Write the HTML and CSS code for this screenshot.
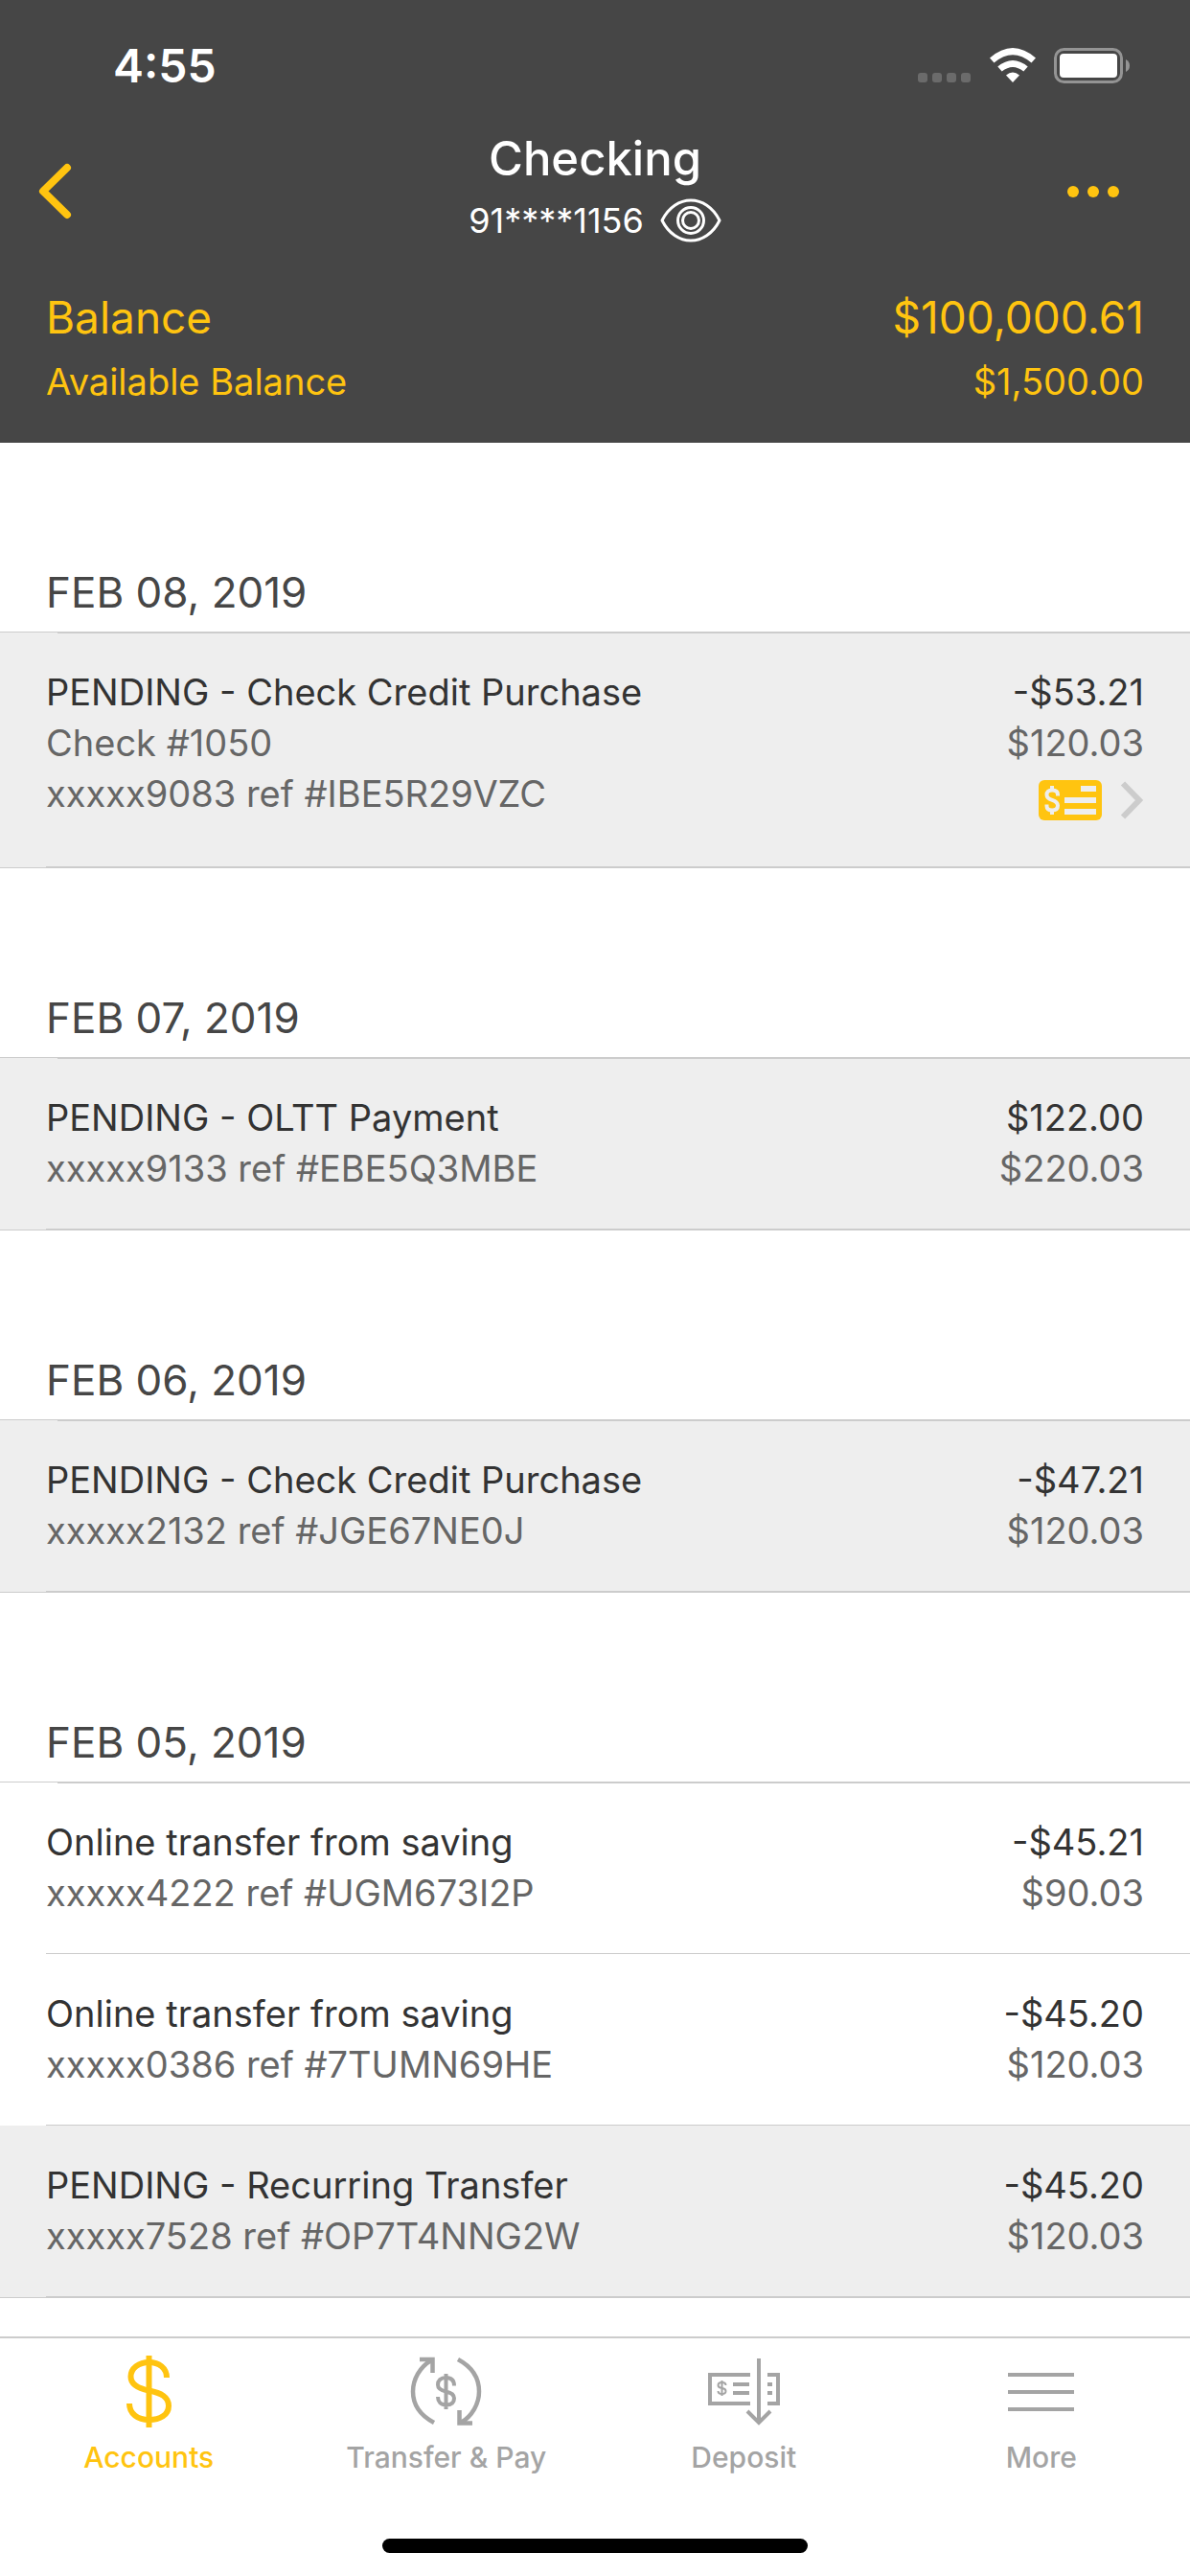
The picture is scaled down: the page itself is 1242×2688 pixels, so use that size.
FILE: index.html
```html
<!DOCTYPE html>
<html lang="en">
<head>
    <meta charset="UTF-8">
    <meta name="viewport" content="width=device-width, initial-scale=1">
    <title>Checking</title>
    <link rel="stylesheet" href="styles.css">
</head>
<body>
    <header class="top">
        <div class="status">
            <span class="time">4:55</span>
            <div class="signals">
                <svg width="56" height="37" viewBox="0 0 56 37" fill="#6b6b6b">
                    <rect x="0" y="26" width="10" height="10" rx="3"/><rect x="15" y="26" width="10" height="10" rx="3"/><rect x="30" y="26" width="10" height="10" rx="3"/><rect x="45" y="26" width="10" height="10" rx="3"/>
                </svg>
                <svg width="48" height="37" viewBox="0 0 48 37" fill="#fff">
                    <path d="M0 10.500Q24 -10.500 48 10.500L43.500 15.500Q24 -1 4.500 15.500Z"/>
                    <path d="M8.300 19.500Q24 6.500 39.700 19.500L35.300 24.500Q24 15.500 12.700 24.500Z"/>
                    <path d="M17 28.500Q24 22.500 31 28.500L24 36Z"/>
                </svg>
                <svg width="80" height="37" viewBox="0 0 80 37">
                    <rect x="1.500" y="1.500" width="69" height="34" rx="9" fill="none" stroke="#949494" stroke-width="3"/>
                    <rect x="6" y="6" width="60" height="25" rx="4" fill="#fff"/>
                    <path d="M75 12Q79 14 79 18.500T75 25Z" fill="#949494"/>
                </svg>
            </div>
        </div>
        <div class="nav">
            <button class="icon-btn" aria-label="Back">
                <svg width="36" height="60" viewBox="0 0 36 60" fill="none" stroke="#ffc410" stroke-width="8" stroke-linecap="round" stroke-linejoin="round"><path d="M30 5L5 29.500L30 54"/></svg>
            </button>
            <div class="account">
                <h1>Checking</h1>
                <div class="number">
                    <span>91****1156</span>
                    <button class="icon-btn" aria-label="Show account number">
                        <svg width="64" height="46" viewBox="0 0 64 46" fill="none" stroke="#fff" stroke-width="3">
                            <path d="M2 23C16 -5 48 -5 62 23C48 51 16 51 2 23Z" stroke-linejoin="round"/>
                            <circle cx="32" cy="23" r="13.500"/><circle cx="32" cy="23" r="8.500"/>
                        </svg>
                    </button>
                </div>
            </div>
            <button class="icon-btn menu" aria-label="Options">
                <svg width="56" height="12" viewBox="0 0 56 12" fill="#ffc410"><circle cx="6" cy="6" r="6"/><circle cx="27" cy="6" r="6"/><circle cx="48" cy="6" r="6"/></svg>
            </button>
        </div>
        <div class="balance">
            <div class="line big"><span>Balance</span><span>$100,000.61</span></div>
            <div class="line"><span>Available Balance</span><span>$1,500.00</span></div>
        </div>
    </header>

    <main>
        <section>
            <h2>FEB 08, 2019</h2>
            <ul>
                <li class="pending">
                    <div class="desc"><p>PENDING - Check Credit Purchase</p><p>Check #1050</p><p>xxxxx9083 ref #IBE5R29VZC</p></div>
                    <div class="amount">
                        <p>-$53.21</p><p>$120.03</p>
                        <button class="icon-btn check" aria-label="View check">
                            <svg width="66" height="42" viewBox="0 0 66 42">
                                <rect width="66" height="42" rx="6" fill="#ffc410"/>
                                <path d="M44 6h16v6H44zM27 18h33v6H27zM27 30h33v6H27z" fill="#eee"/>
                                <path d="M20 16.500V15Q20 10.500 14.200 10.500T8.500 15.500Q8.500 19 14.200 20.800T20 26.500Q20 31.500 14.200 31.500T8.500 27V25.500" fill="none" stroke="#eee" stroke-width="4"/>
                                <path d="M12 6h4v5h-4zM12 31h4v5h-4z" fill="#eee"/>
                            </svg>
                            <svg width="26" height="40" viewBox="0 0 26 40" fill="none" stroke="#ccc" stroke-width="6"><path d="M4 2.500L21 20L4 37.500"/></svg>
                        </button>
                    </div>
                </li>
            </ul>
        </section>
        <section>
            <h2>FEB 07, 2019</h2>
            <ul>
                <li class="pending">
                    <div class="desc"><p>PENDING - OLTT Payment</p><p>xxxxx9133 ref #EBE5Q3MBE</p></div>
                    <div class="amount"><p>$122.00</p><p>$220.03</p></div>
                </li>
            </ul>
        </section>
        <section>
            <h2>FEB 06, 2019</h2>
            <ul>
                <li class="pending">
                    <div class="desc"><p>PENDING - Check Credit Purchase</p><p>xxxxx2132 ref #JGE67NE0J</p></div>
                    <div class="amount"><p>-$47.21</p><p>$120.03</p></div>
                </li>
            </ul>
        </section>
        <section>
            <h2>FEB 05, 2019</h2>
            <ul>
                <li>
                    <div class="desc"><p>Online transfer from saving</p><p>xxxxx4222 ref #UGM673I2P</p></div>
                    <div class="amount"><p>-$45.21</p><p>$90.03</p></div>
                </li>
                <li>
                    <div class="desc"><p>Online transfer from saving</p><p>xxxxx0386 ref #7TUMN69HE</p></div>
                    <div class="amount"><p>-$45.20</p><p>$120.03</p></div>
                </li>
                <li class="pending">
                    <div class="desc"><p>PENDING - Recurring Transfer</p><p>xxxxx7528 ref #OP7T4NNG2W</p></div>
                    <div class="amount"><p>-$45.20</p><p>$120.03</p></div>
                </li>
            </ul>
        </section>
    </main>

    <footer class="bottom">
        <nav class="tabs">
            <a href="#" class="on">
                <svg width="76" height="76" viewBox="0 0 76 76" fill="none" stroke="currentColor" stroke-width="6">
                    <path d="M57 23C57 13 49 7 38.500 7S19.500 13 19.500 22C19.500 30 26 34 38.500 36.500S59 43 59 52.500S50 67 38.500 67S18 61 18 50"/>
                    <path d="M38.500 0V75"/>
                </svg>
                <span>Accounts</span>
            </a>
            <a href="#">
                <svg width="76" height="76" viewBox="0 0 76 76" fill="none" stroke="currentColor" stroke-width="4.500">
                    <path d="M25 70C10 62 3 51 3 37.500C3 25 10 12 22 5M50 4C65 12 72 24 72 37.500C72 50 65 63 53 70"/>
                    <path d="M10 4H23.500V18M65 70.500H51.500V57"/>
                    <path d="M46 31.500C46 26 43 23 37.500 23S29 26 29 30.500C29 35 33 36.500 37.500 37.500S46 40 46 44.500S43 51.500 37.500 51.500S29 48 29 43M37.500 19V56" stroke-width="4"/>
                </svg>
                <span>Transfer &amp; Pay</span>
            </a>
            <a href="#">
                <svg width="76" height="76" viewBox="0 0 76 76" fill="none" stroke="currentColor" stroke-width="4">
                    <path d="M45 20H3V50H45M63 20H74V50H63"/>
                    <path d="M54 3V70M42 58L54 70L66 58"/>
                    <path d="M27 30H44M27 39H44M63 30H68M63 39H68"/>
                    <path d="M19.500 31Q19.500 28 15.500 28T11.500 31Q11.500 33.500 15.500 34T19.500 37Q19.500 40 15.500 40T11.500 37M15.500 26V42" stroke-width="2"/>
                </svg>
                <span>Deposit</span>
            </a>
            <a href="#">
                <svg width="76" height="76" viewBox="0 0 76 76" fill="none" stroke="currentColor" stroke-width="4"><path d="M3 20H72M3 38H72M3 56H72"/></svg>
                <span>More</span>
            </a>
        </nav>
        <div class="home"></div>
    </footer>
</body>
</html>
```

FILE: styles.css
```css
* { margin: 0; padding: 0; box-sizing: border-box; }
body { min-height: 100vh; display: flex; flex-direction: column; background: #fff; color: #333; font-family: Inter, "Liberation Sans", sans-serif; font-size: 38px; line-height: 53px; }
svg { display: block; }
ul { list-style: none; }
a { text-decoration: none; }
.icon-btn { display: flex; align-items: center; border: 0; background: none; cursor: pointer; }

/* header */
.top { padding-bottom: 30px; background: #464646; color: #fff; }
.status { display: flex; justify-content: space-between; align-items: center; height: 136px; padding: 0 62px 0 118px; }
.time { font-size: 48px; font-weight: 600; }
.signals { display: flex; gap: 19px; }
.nav { display: grid; grid-template-columns: 1fr auto 1fr; align-items: center; height: 124px; padding: 0 40px; }
.account { text-align: center; }
.account h1 { font-size: 49px; font-weight: 500; line-height: 60px; }
.number { display: flex; align-items: center; justify-content: center; gap: 17px; font-size: 36px; height: 68px; }
.menu { justify-self: end; margin-right: 32px; }
.balance { padding: 38px 48px 0; color: #ffc410; }
.line { display: flex; justify-content: space-between; line-height: 67px; }
.big { font-size: 46px; }

/* transactions */
main { flex: 1; }
h2 { padding: 126px 48px 11px; font-size: 44px; font-weight: 400; line-height: 60px; color: #464646; }
ul { border-top: 1px solid #ccc; border-bottom: 1px solid #ccc; }
li { position: relative; display: flex; justify-content: space-between; padding: 36px 48px 37px; }
li:first-child::before, li::after { content: ""; position: absolute; right: 0; height: 1px; background: #ccc; }
li:first-child::before { left: 60px; top: 0; }
li::after { left: 48px; bottom: 0; }
li.pending { background: #eee; }
li p + p { color: #666; }
.amount { text-align: right; }
.check { gap: 18px; height: 66px; margin-left: auto; }

/* tab bar */
.bottom { height: 250px; border-top: 2px solid #ccc; background: #fff; }
.tabs { display: grid; grid-template-columns: repeat(4, 1fr); padding-top: 18px; }
.tabs a { display: flex; flex-direction: column; align-items: center; gap: 10px; font-size: 30px; font-weight: 500; line-height: 40px; color: #a4a4a4; }
.tabs a.on { color: #ffc410; }
.home { width: 444px; max-width: 60%; height: 15px; margin: 65px auto 0; border-radius: 8px; background: #000; }
```
